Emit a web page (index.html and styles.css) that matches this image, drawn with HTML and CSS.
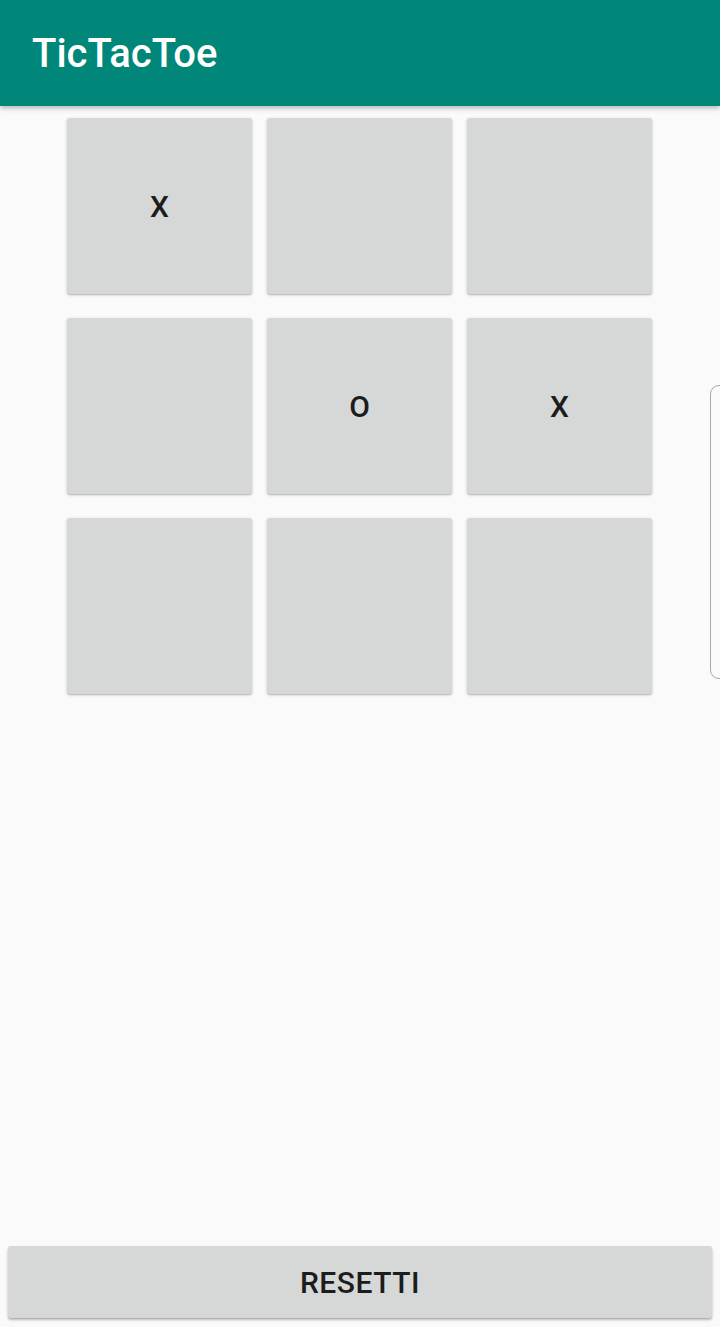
FILE: index.html
```html
<!DOCTYPE html>
<html lang="fi">
<head>
<meta charset="utf-8">
<title>TicTacToe</title>
<link rel="stylesheet" href="styles.css">
</head>
<body>
<div class="screen">
  <header class="appbar"><h1 class="title">TicTacToe</h1></header>
  <main class="content">
    <div class="board">
      <button class="cell">X</button>
      <button class="cell"></button>
      <button class="cell"></button>
      <button class="cell"></button>
      <button class="cell">O</button>
      <button class="cell">X</button>
      <button class="cell"></button>
      <button class="cell"></button>
      <button class="cell"></button>
    </div>
    <div class="footer">
      <button class="reset">RESETTI</button>
    </div>
  </main>
  <div class="edge-handle"></div>
</div>
</body>
</html>
```

FILE: styles.css
```css
html, body {
  margin: 0;
  padding: 0;
  background: #fafafa;
}
.screen {
  position: relative;
  width: 720px;
  height: 1327px;
  display: flex;
  flex-direction: column;
  font-family: Roboto, "Noto Sans", sans-serif;
  overflow: hidden;
}
.appbar {
  height: 106px;
  flex: none;
  background: #00877a;
  display: flex;
  align-items: center;
  padding-left: 32px;
  box-shadow: 0 2px 5px rgba(0,0,0,0.28);
  position: relative;
  z-index: 2;
}
.title {
  margin: 0;
  color: #ffffff;
  font-size: 40px;
  font-weight: 500;
  letter-spacing: 0;
}
.content {
  flex: 1;
  display: flex;
  flex-direction: column;
}
.board {
  margin-top: 12px;
  margin-left: 67px;
  display: grid;
  grid-template-columns: repeat(3, 185px);
  grid-template-rows: repeat(3, 176px);
  column-gap: 15px;
  row-gap: 24px;
}
.cell, .reset {
  border: none;
  background: #d6d7d7;
  border-radius: 3px;
  box-shadow: 0 1px 3px rgba(0,0,0,0.22), 0 1px 1px rgba(0,0,0,0.10);
  font-family: Roboto, "Noto Sans", sans-serif;
  font-weight: 500;
  color: #1c1c1c;
  padding: 0;
}
.cell {
  font-size: 30px;
}
.footer {
  margin-top: auto;
  padding: 0 8px 9px 8px;
}
.reset {
  width: 704px;
  height: 72px;
  font-size: 30px;
  letter-spacing: 0.5px;
  box-shadow: 0 2px 3px rgba(0,0,0,0.25), 0 1px 1px rgba(0,0,0,0.10);
}
.edge-handle {
  position: absolute;
  left: 710px;
  top: 385px;
  width: 30px;
  height: 294px;
  border: 1.5px solid #a9a9a9;
  border-radius: 9px;
  box-sizing: border-box;
}
```
